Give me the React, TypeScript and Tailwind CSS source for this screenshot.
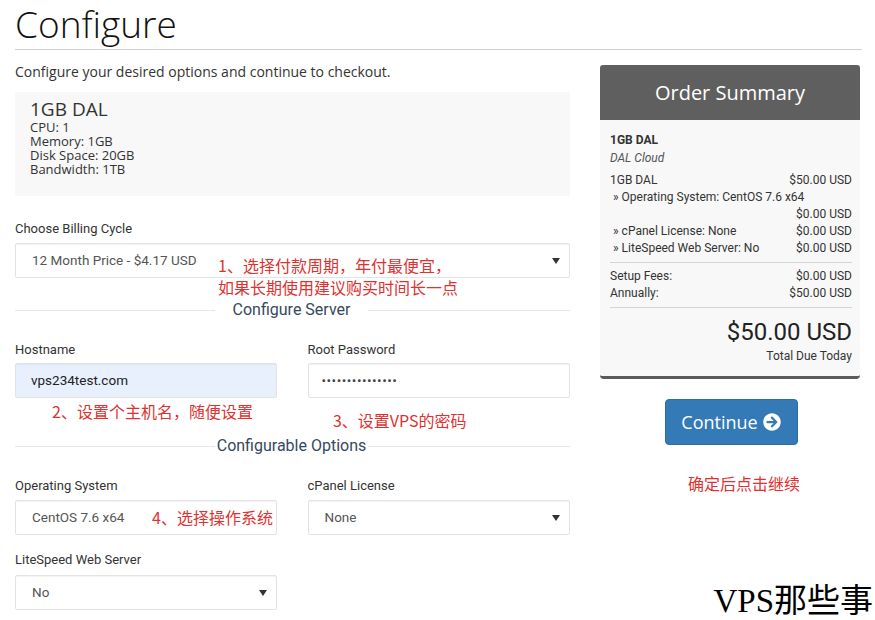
import { FaArrowCircleRight } from "react-icons/fa";

const red = "text-[#e0312f]";
const roboto = "font-['Roboto',sans-serif]";

function Caret() {
  return (
    <svg width="8" height="6" viewBox="0 0 8 6" className="absolute right-[9px] top-1/2 -translate-y-1/2">
      <path d="M0 0h8L4 6z" fill="#333" />
    </svg>
  );
}

function Field({ value, select, className = "", children }: { value: string; select?: boolean; className?: string; children?: React.ReactNode }) {
  return (
    <div className={`relative flex h-[35px] items-center rounded-[2px] border border-[#e3e3e3] pl-[16px] text-[13.5px] text-[#555] shadow-[inset_0_1px_1px_rgba(0,0,0,0.05)] ${roboto} ${className}`}>
      {value}
      {select && <Caret />}
      {children}
    </div>
  );
}

function Divider({ title, left, right }: { title: string; left: number; right: number }) {
  return (
    <div className="flex items-center">
      <div className="h-px bg-[#e6e6e6]" style={{ width: left }} />
      <div className={`flex-1 text-center text-[16px] leading-[20px] text-[#34495e] ${roboto}`}>{title}</div>
      <div className="h-px bg-[#e6e6e6]" style={{ width: right }} />
    </div>
  );
}

function Row({ l, r, className = "" }: { l: string; r: string; className?: string }) {
  return (
    <div className={`flex justify-between leading-[17px] ${className}`}>
      <span>{l}</span>
      <span>{r}</span>
    </div>
  );
}

export default function App() {
  return (
    <div className="relative h-[620px] w-[875px] overflow-hidden bg-white font-['Open_Sans',sans-serif]">
      <div className="px-[15px]">
        <h1 className="font-['Open_Sans',sans-serif] text-[37px] leading-[48px] font-light text-[#111]">Configure</h1>
        <div className="mt-[1px] h-px w-[847px] bg-[#d0d0d0]" />
        <div className="mt-[15px] flex gap-[30px]">
          {/* left */}
          <div className="w-[555px]">
            <p className="mt-[-1px] text-[14px] leading-[16px] text-[#333]">Configure your desired options and continue to checkout.</p>
            <div className="mt-[12px] h-[104px] bg-[#f8f8f8] px-[15px] pt-[6px] text-[#333]">
              <div className="text-[19px] leading-[22px]">1GB DAL</div>
              <div className="text-[13px] leading-[14px]">
                <div>CPU: 1</div>
                <div>Memory: 1GB</div>
                <div>Disk Space: 20GB</div>
                <div>Bandwidth: 1TB</div>
              </div>
            </div>

            <div className={`mt-[25px] text-[13px] leading-[16px] text-[#333] ${roboto}`}>Choose Billing Cycle</div>
            <Field value="12 Month Price - $4.17 USD" select className="mt-[6px]">
              <div className={`absolute left-[202px] top-[10px] text-[16px] leading-[22px] ${red} font-['Noto_Sans_CJK_SC',sans-serif] whitespace-nowrap`}>
                1、选择付款周期，年付最便宜，
                <br />
                如果长期使用建议购买时间长一点
              </div>
            </Field>

            <div className="mt-[22px]">
              <Divider title="Configure Server" left={200} right={202} />
            </div>

            <div className="mt-[22px] flex gap-[31px]">
              <div className="w-[262px]">
                <div className={`text-[13px] leading-[16px] text-[#333] ${roboto}`}>Hostname</div>
                <Field value="vps234test.com" className="mt-[5px] !bg-[#e8f0fe] !text-[#222] !pl-[15px]" />
              </div>
              <div className="w-[263px]">
                <div className={`text-[13px] leading-[16px] text-[#333] ${roboto}`}>Root Password</div>
                <Field value="•••••••••••••••" className="mt-[5px] !pl-[13px] tracking-[0.5px] !text-[#444]" />
              </div>
            </div>
            <div className={`flex font-['Noto_Sans_CJK_SC',sans-serif] text-[16px] leading-[20px] ${red}`}>
              <div className="ml-[37px] mt-[3px]">2、设置个主机名，随便设置</div>
              <div className="ml-[80px] mt-[12px]">3、设置VPS的密码</div>
            </div>

            <div className="mt-[6px]">
              <Divider title="Configurable Options" left={200} right={202} />
            </div>

            <div className="mt-[22px] flex gap-[31px]">
              <div className="w-[262px]">
                <div className={`text-[13px] leading-[16px] text-[#333] ${roboto}`}>Operating System</div>
                <Field value="CentOS 7.6 x64" className="mt-[6px]">
                  <span className={`absolute left-[136px] top-[5px] text-[16px] leading-[22px] ${red} font-['Noto_Sans_CJK_SC',sans-serif] whitespace-nowrap`}>4、选择操作系统</span>
                </Field>
              </div>
              <div className="w-[263px]">
                <div className={`text-[13px] leading-[16px] text-[#333] ${roboto}`}>cPanel License</div>
                <Field value="None" select className="mt-[6px]" />
              </div>
            </div>
            <div className="mt-[17px] w-[262px]">
              <div className={`text-[13px] leading-[16px] text-[#333] ${roboto}`}>LiteSpeed Web Server</div>
              <Field value="No" select className="mt-[7px]" />
            </div>
          </div>

          {/* right */}
          <div className="w-[262px]">
            <div className="flex h-[55px] items-center justify-center rounded-t-[3px] bg-[#5f5f5f] text-[20px] text-white">Order Summary</div>
            <div className={`rounded-b-[4px] border-b-[3px] border-[#5a5a5a] bg-[#f8f8f8] pl-[10px] pr-[8px] pt-[12px] pb-[12px] text-[12px] text-[#333] ${roboto}`}>
              <div className="font-bold leading-[16px]">1GB DAL</div>
              <div className="mt-[2px] italic leading-[16px] text-[#555]">DAL Cloud</div>
              <Row l="1GB DAL" r="$50.00 USD" className="mt-[6px]" />
              <div className="pl-[3px] leading-[17px]">» Operating System: CentOS 7.6 x64</div>
              <div className="text-right leading-[17px]">$0.00 USD</div>
              <Row l="» cPanel License: None" r="$0.00 USD" className="pl-[3px]" />
              <Row l="» LiteSpeed Web Server: No" r="$0.00 USD" className="pl-[3px]" />
              <div className="mt-[5px] mb-[5px] h-px bg-[#d5d5d5]" />
              <Row l="Setup Fees:" r="$0.00 USD" />
              <Row l="Annually:" r="$50.00 USD" />
              <div className="mt-[5px] h-px bg-[#d5d5d5]" />
              <div className="mt-[9px] text-right text-[24px] leading-[30px] text-[#222]">$50.00 USD</div>
              <div className="mt-[1px] text-right leading-[16px]">Total Due Today</div>
            </div>
            <div className="mt-[20px] flex justify-center">
              <button className="ml-[2px] flex h-[46px] w-[133px] items-center justify-center gap-[5px] rounded-[4px] border border-[#2e6da4] bg-[#337ab7] text-[18px] text-white">
                Continue <FaArrowCircleRight className="h-[18px] w-[18px]" />
              </button>
            </div>
            <div className={`mt-[28px] pl-[28px] text-center font-['Noto_Sans_CJK_SC',sans-serif] text-[16px] leading-[20px] ${red}`}>确定后点击继续</div>
          </div>
        </div>
      </div>
      <div className="absolute right-[2px] bottom-[0px] font-['Liberation_Serif','Noto_Sans_CJK_SC',serif] text-[33px] leading-[38px] text-black">VPS那些事</div>
    </div>
  );
}
